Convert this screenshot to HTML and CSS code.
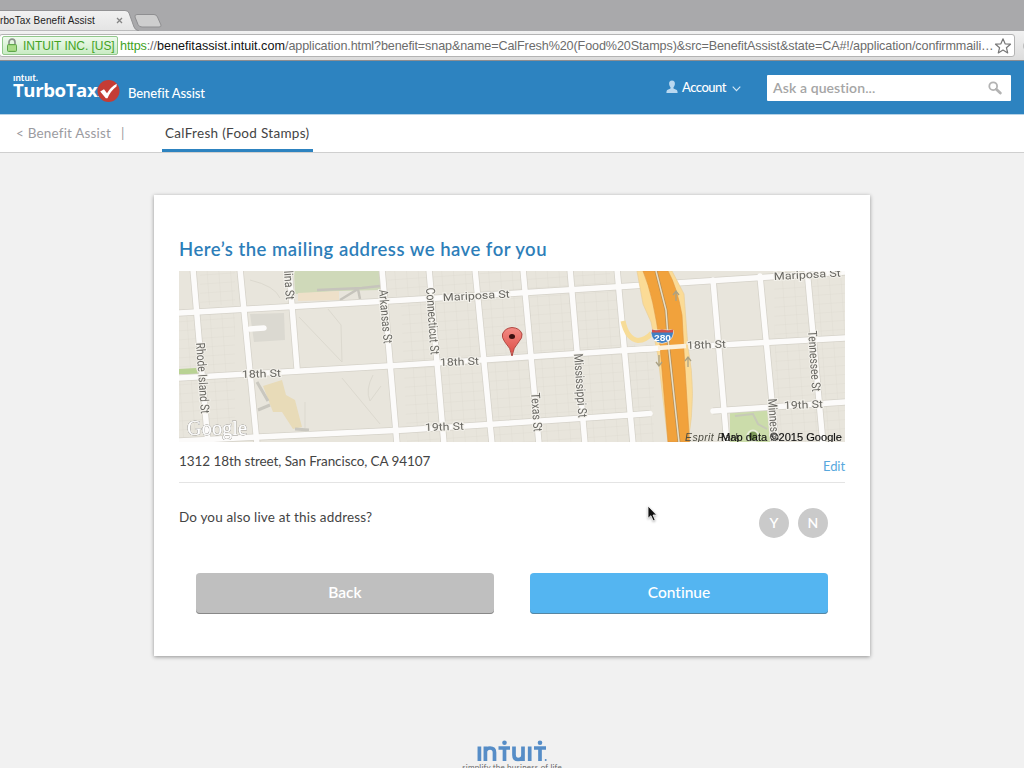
FILE: index.html
```html
<!DOCTYPE html>
<html lang="en">
<head>
<meta charset="utf-8">
<title>TurboTax Benefit Assist</title>
<link rel="stylesheet" href="styles.css">
</head>
<body>
<div class="browser">
  <div class="tabstrip">
    <svg class="tabshape" width="170" height="21" viewBox="0 10 170 21">
      <defs><linearGradient id="tg" x1="0" y1="0" x2="0" y2="1"><stop offset="0" stop-color="#f1f1f1"/><stop offset="1" stop-color="#e4e4e4"/></linearGradient></defs>
      <path d="M-2 10.5H125Q128 10.5 129 13L134 27Q135 30 139 31H-2Z" fill="url(#tg)" stroke="#929294"/>
      <path d="M137 14.5H154Q156.500 14.500 157.500 17L161 25Q161.500 27 159 27H142Q139 27 138 24.500L135 17Q134.500 14.500 137 14.500Z" fill="#cecece" stroke="#8f8f91"/>
      <path d="M117 18l5 5m0-5l-5 5" stroke="#858585" stroke-width="1.300"/>
    </svg>
    <span class="tabtitle">rboTax Benefit Assist</span>
  </div>
  <div class="toolbar">
    <div class="omnibox">
      <div class="cert">
        <svg width="12" height="15" viewBox="0 0 12 15"><path d="M3 7V4.200a3 3 0 0 1 6 0V7" fill="none" stroke="#8b938a" stroke-width="1.700"/><rect x="1.500" y="6.500" width="9" height="7" rx="1" fill="#9bd477" stroke="#5ea54c"/><path d="M2 9h8M2 11h8" stroke="#c2e8aa" stroke-width=".7"/></svg>
        <span>INTUIT INC. [US]</span>
      </div>
      <span class="url"><span class="secure">https</span>://<span class="domain">benefitassist.intuit.com</span>/application.html?benefit=snap&amp;name=CalFresh%20(Food%20Stamps)&amp;src=BenefitAssist&amp;state=CA#!/application/confirmmaili…</span>
      <svg class="star" width="18" height="18" viewBox="0 0 18 18"><path d="M9 1.800l2.100 5 5.400.4-4.100 3.500 1.300 5.200L9 13.100l-4.700 2.800 1.300-5.200L1.500 7.200l5.400-.4z" fill="#fff" stroke="#777" stroke-width="1.200" stroke-linejoin="round"/></svg>
    </div>
    <span class="knob"></span>
  </div>
</div>
<header class="header">
  <div class="brand">
    <div class="wordmark"><span class="mini">ıntuıt.</span><span class="turbo">TurboTax<small>.</small></span></div>
    <svg class="check" width="23" height="24" viewBox="0 0 23 24"><circle cx="11.500" cy="12" r="11" fill="#c43c35"/><path d="M3.200 12.500l3.800-2.300 3 4Q13.500 8 19.800 4.700L19.500 7.500Q13.500 12 10.500 19.200L8.800 19.200Z" fill="#fff"/></svg>
    <span class="product">Benefit Assist</span>
  </div>
  <div class="account">
    <svg width="12" height="14" viewBox="0 0 12 14"><path d="M6 .5c2 0 3.100 1.400 2.900 3.400C8.800 5.600 8 6.400 7.500 7.200V8.500L10.800 10Q11.600 10.500 11.600 13H.4Q.4 10.500 1.200 10L4.500 8.500V7.200C4 6.400 3.200 5.600 3.100 3.900 2.900 1.900 4 .5 6 .5Z" fill="#b9d8f0"/></svg>
    <span>Account</span>
    <svg width="9" height="6" viewBox="0 0 9 6"><path d="M.7.700L4.500 4.700 8.300.7" fill="none" stroke="#d5e8f6" stroke-width="1.100"/></svg>
  </div>
  <div class="search"><span>Ask a question...</span>
    <svg width="14" height="14" viewBox="0 0 14 14"><circle cx="5.200" cy="5.200" r="3.900" fill="none" stroke="#b3b3b3" stroke-width="1.800"/><path d="M8.300 8.300l4 3.700" stroke="#b3b3b3" stroke-width="2.800" stroke-linecap="round"/></svg>
  </div>
</header>
<nav class="subnav">
  <span class="crumb">&lt; Benefit Assist</span><span class="bar">|</span>
  <span class="tab">CalFresh (Food Stamps)</span>
</nav>
<main class="main">
  <section class="card">
    <h1><span>Here’s the mailing address we have for you</span></h1>
    <svg class="map" width="666" height="171" viewBox="179 271 666 171">
      <defs>
        <pattern id="lots" width="11.700" height="9" patternUnits="userSpaceOnUse" patternTransform="rotate(-4)"><path d="M0 0H11.700M0 0V9" stroke="#dad7cc" stroke-width=".6"/></pattern>
        <linearGradient id="pin" x1="0" y1="0" x2="0" y2="1"><stop offset="0" stop-color="#f28b84"/><stop offset="1" stop-color="#dd4b43"/></linearGradient>
      </defs>
      <rect x="179" y="271" width="666" height="171" fill="#e8e5dc"/>
      <path d="M179 315L235 311V442H179ZM401 303L618 291 630 442H407ZM774 280L845 275V442H776ZM200 271H235V305H200ZM388 271H610V285L388 297ZM624 345L654 344V442H629Z" fill="url(#lots)"/>
      <path d="M294 271H380V290L340 291 295 294Z" fill="#cfd9b9"/>
      <path d="M298 293L339 291V300L298 301Z" fill="#eee0c9"/>
      <path d="M317 290l45-2 18-2M340 300l18-11 2 10" fill="none" stroke="#c6c4bc" stroke-width="2.500"/>
      <path d="M250 314L284 313 285 340 254 342Z" fill="#dbd9d1"/>
      <path d="M179 369L196 368 198 374H179Z" fill="#b9d293"/>
      <path d="M263 386L282 380 286 395 295 400 302 427 293 429 282 412 273 412Z" fill="#e8dbb8"/>
      <path d="M257 382l11 19M258 410l12-5M295 429l14 1" stroke="#c9c7bf" stroke-width="3"/>
      <path d="M299 317L342 362 341 325 328 309M373 375q-8 15-3 26l11-15M342 378l38 46M305 402V428M250 280q25 6 30 18" fill="none" stroke="#dcd9cf"/>
      <path d="M730 412L767 410 770 442H730Z" fill="#cbdcaa"/><path d="M735 416l18-2 5 10 9 5" fill="none" stroke="#c7c9b8" stroke-width="2"/>
      <g fill="none" stroke="#d5d2c9" stroke-width="7">
        <path d="M193 269L208 444M240 269L257 444M289 269L297 368M382 269L397 444M429 269L444 444M475 269L492 444M523 269L539 444M570 269L585 444M617 269L633 444M713 278L727 444M760 276L776 444M807 269L823 444"/>
        <path d="M179 313L405 300 630 286 845 272M179 378L405 365 630 350 845 338M179 441L258 437 405 430 630 415 650 413.500M713 411L845 402"/>
      </g>
      <g fill="none" stroke="#fcfbfa" stroke-width="5.500" stroke-linecap="round">
        <path d="M193 269L208 444M240 269L257 444M289 269L297 368M382 269L397 444M429 269L444 444M475 269L492 444M523 269L539 444M570 269L585 444M617 269L633 444M713 280L727 444M760 276L776 444M807 269L823 444"/>
        <path d="M179 313L405 300 630 286 845 272M179 378L405 365 630 350 845 338M179 441L258 437 405 430 630 415 650 413.500M713 411L845 402M250 329L264 328"/>
      </g>
      <path d="M623 321Q627 339 638 340.500 646 340 652 333" fill="none" stroke="#f7dc98" stroke-width="5"/>
      <path d="M637 271H672L684 294 688 348Q697 392 688 442H668L658 356 651 322 643 304Z" fill="#fbdb96" stroke="#e9cf98" stroke-width=".7"/>
      <path d="M643 271H668Q677 287 682 315L684 352 689.500 442H668L660 346Q654 297 643 271Z" fill="#f1a23c" stroke="#df9640" stroke-width=".6"/>
      <path d="M656 271L666 310 669 350 679 442" fill="none" stroke="#b98e54" stroke-width="3"/>
      <path d="M656 271L666 310 669 350 679 442" fill="none" stroke="#e6dfc8" stroke-width="1.500"/>
      <path d="M620 350.500L660 348" stroke="#fcfbfa" stroke-width="5.500"/><path d="M658 348L686 346" stroke="#fcf1dc" stroke-width="4.500"/>
      <path d="M676 301v-9m-3 3l3-4 3 4M659 355v10m-3-3l3 4 3-4M688 367v-9m-3 3l3-4 3 4" fill="none" stroke="#aaa184" stroke-width="1.300"/>
      <path d="M652 330L673 330 673.500 333Q672 342 662 343.500 652 342 651 333Z" fill="#3f80c4" stroke="#eee" stroke-width=".7"/><path d="M652 329.500l4 1 6-1 6 1 5-1v3H652z" fill="#d44f48"/>
      <text x="654" y="340.500" class="shield" textLength="17" lengthAdjust="spacingAndGlyphs">280</text>
      <g class="label">
        <text transform="translate(443 301) rotate(-3)" textLength="67" lengthAdjust="spacingAndGlyphs">Mariposa St</text>
        <text transform="translate(774 280) rotate(-3)" textLength="67" lengthAdjust="spacingAndGlyphs">Mariposa St</text>
        <text transform="translate(242 378) rotate(-2)" textLength="39" lengthAdjust="spacingAndGlyphs">18th St</text>
        <text transform="translate(440 366) rotate(-2)" textLength="39" lengthAdjust="spacingAndGlyphs">18th St</text>
        <text transform="translate(687 349) rotate(-2)" textLength="39" lengthAdjust="spacingAndGlyphs">18th St</text>
        <text transform="translate(425 431) rotate(-2)" textLength="39" lengthAdjust="spacingAndGlyphs">19th St</text>
        <text transform="translate(784 409) rotate(-2)" textLength="39" lengthAdjust="spacingAndGlyphs">19th St</text>
      </g>
      <g class="label road">
        <text transform="translate(196 343) rotate(86)" textLength="71" lengthAdjust="spacingAndGlyphs">Rhode Island St</text>
        <text transform="translate(284 271) rotate(86)" textLength="29" lengthAdjust="spacingAndGlyphs">lina St</text>
        <text transform="translate(379 290) rotate(85)" textLength="54" lengthAdjust="spacingAndGlyphs">Arkansas St</text>
        <text transform="translate(426 288) rotate(86)" textLength="67" lengthAdjust="spacingAndGlyphs">Connecticut St</text>
        <text transform="translate(531 393) rotate(86)" textLength="39" lengthAdjust="spacingAndGlyphs">Texas St</text>
        <text transform="translate(574 354) rotate(86)" textLength="64" lengthAdjust="spacingAndGlyphs">Mississippi St</text>
        <text transform="translate(808 331) rotate(86)" textLength="61" lengthAdjust="spacingAndGlyphs">Tennessee St</text>
        <text transform="translate(768 399) rotate(86)" textLength="60" lengthAdjust="spacingAndGlyphs">Minnesota St</text>
      </g>
      <path d="M512 356Q511 348 504.500 341.500 501.500 337 502.500 334 505 328 512 327.500 520 328 522 334 522.500 338 519 341.500 513 348 512 356Z" fill="url(#pin)" stroke="#a93b36" stroke-width=".9"/>
      <ellipse cx="512" cy="336.500" rx="3" ry="2.500" fill="#3b1010"/>
      <text x="187" y="434.500" class="google" textLength="60" lengthAdjust="spacingAndGlyphs">Google</text>
      <circle cx="753" cy="436" r="5.500" fill="#7d9a59" stroke="#e8eedb" stroke-width="2"/>
      <text x="685" y="441" class="park" textLength="55">Esprit Park</text>
      <text x="721" y="440.500" class="copy" textLength="121" lengthAdjust="spacingAndGlyphs">Map data ©2015 Google</text>
    </svg>
    <div class="address"><span>1312 18th street, San Francisco, CA 94107</span><a class="edit">Edit</a></div>
    <div class="question"><span>Do you also live at this address?</span><div class="choices"><span>Y</span><span>N</span></div></div>
    <div class="actions"><div class="btn back">Back</div><div class="btn go">Continue</div></div>
  </section>
</main>
<footer class="footer">
  <svg width="72" height="22" viewBox="476 740 72 22" fill="none" stroke="#568dc7" stroke-width="3.700">
    <path d="M479.400 746.500V761M485.400 761V746.500M485.400 751Q486.500 748 490 748 494.500 748 494.500 752.500V761M498.500 748H510M504.500 746.500V761M514 746.500V755Q514 759.500 518 759.500 523 759.500 523 755V746.500M523 755V761M529.700 746.500V761M534 748H546M540 746.500V761"/>
    <g fill="#568dc7" stroke="none"><circle cx="504.500" cy="742.800" r="2.300"/><circle cx="540" cy="742.800" r="2.300"/><circle cx="545.700" cy="760" r="1"/></g>
  </svg>
  <span>simplify the business of life</span>
</footer>
<svg class="cursor" width="12" height="18" viewBox="0 0 12 18"><path d="M1 1V13.300L3.900 10.700 6.200 15.800 8.200 14.900 6 10H9.700Z" fill="#111" stroke="#fff" stroke-width=".8"/></svg>
</body>
</html>
```
FILE: styles.css
```css
* { box-sizing: border-box; }
body { margin: 0; width: 1024px; height: 768px; overflow: hidden; display: flex; flex-direction: column; background: #f1f1f1; font-family: Lato, sans-serif; color: #444; white-space: nowrap; font-variant-ligatures: none; }
svg { display: block; flex: none; }
.browser { height: 61px; flex: none; background: #a9a9ab; font-family: "Liberation Sans", sans-serif; }
.tabstrip { display: grid; height: 31px; align-items: end; }
.tabstrip > * { grid-area: 1 / 1; }
.tabtitle { font-size: 10px; color: #222; line-height: 20px; letter-spacing: .1px; }
.toolbar { height: 30px; display: flex; align-items: flex-start; padding-top: 3px; background: linear-gradient(#f1f1f1, #dcdcdc); border-bottom: 1px solid #8d8d90; }
.omnibox { width: 1016px; height: 23px; margin-left: -1px; flex: none; display: flex; align-items: center; background: #fff; border: 1px solid #b4b4b4; border-radius: 3px; }
.cert { width: 116px; height: 19px; margin-left: 2px; display: flex; align-items: center; gap: 5px; padding-left: 3px; border: 1px solid #92c88c; border-radius: 2px; background: linear-gradient(#effaed, #c9ebc4); color: #43a31f; font-size: 12px; letter-spacing: -.05px; }
.url { width: 871px; margin-left: 2px; font-size: 12.600px; letter-spacing: -.118px; color: #6c6c6c; }
.secure { color: #3ea21b; }
.domain { color: #111; letter-spacing: .03px; }
.star { margin-left: 3px; }
.knob { width: 12px; height: 12px; margin: 6px 0 0 8px; border-radius: 50%; background: #bbb; flex: none; }
.header { height: 53px; flex: none; background: #2d83c0; color: #fff; display: flex; padding-left: 13px; }
.brand { width: 653px; display: flex; }
.wordmark { display: flex; flex-direction: column; padding-top: 12px; width: 85px; }
.mini { font: bold 9.500px/10px Lato, sans-serif; letter-spacing: .05px; }
.turbo { font: 700 18.600px/14px "Open Sans", sans-serif; letter-spacing: -.4px; }
.turbo small { font-size: 8px; font-weight: 400; line-height: 1; }
.check { margin: 18px 8px 0 -1px; }
.product { font-size: 13px; line-height: 20px; margin-top: 22px; font-weight: 500; letter-spacing: -.1px; }
.account { width: 101px; display: flex; gap: 4px; padding-top: 17px; font-size: 13px; line-height: 19px; font-weight: 500; }
.account span { letter-spacing: -.5px; }
.account svg { margin-top: 2px; }
.account svg:last-child { margin: 8px 0 0 2px; }
.search { width: 244px; height: 26px; margin-top: 14px; padding: 0 9px 0 6px; background: #fff; color: #a5a5a5; display: flex; align-items: center; justify-content: space-between; font-size: 14px; font-weight: 600; border-radius: 1px; letter-spacing: .1px; line-height: 24px; }
.search span { margin-top: -1px; }
.subnav { height: 39px; flex: none; background: #fff; border-bottom: 1px solid #cfcfcf; border-top: 1px solid #b6d2e6; display: flex; font-size: 13.500px; line-height: 36px; color: #9b9b9f; padding-left: 16px; }
.crumb { width: 105px; letter-spacing: .18px; }
.bar { width: 41px; }
.tab { width: 151px; height: 37px; padding-left: 3px; color: #444; border-bottom: 3px solid #2d83c0; letter-spacing: .3px; }
.main { padding: 42px 154px 0; flex: none; height: 587px; }
.card { width: 716px; height: 461px; background: #fff; box-shadow: 0 1px 4px rgba(0,0,0,.4); padding: 41px 25px 0; }
h1 { margin: 0; height: 35px; font-size: 18.500px; line-height: 26px; font-weight: 600; color: #2d7eb9; letter-spacing: .49px; }
.map { filter: blur(.3px); }
.label { font: 10.500px Roboto, sans-serif; fill: #686762; stroke: #f4f2ec; stroke-width: 2px; paint-order: stroke; }
.road { font-size: 12.500px; }
.shield { font: bold 8.500px "Liberation Sans", sans-serif; fill: #fff; }
.google { font: 20px "Liberation Serif", serif; fill: #fff; stroke: #fff; stroke-width: .5px; filter: drop-shadow(.7px .8px .3px #66645e) drop-shadow(0 0 .5px #a5a39b); }
.park { font: italic 10.500px "Liberation Sans", sans-serif; fill: #4d4d43; }
.copy { font: 10.500px "Liberation Sans", sans-serif; fill: #111; stroke: #111; stroke-width: .15px; }
.address { height: 41px; border-bottom: 1px solid #e4e4e4; display: flex; justify-content: space-between; width: 666px; font-size: 13.500px; line-height: 38px; letter-spacing: -.08px; }
.edit { color: #58a8dd; font-size: 13px; line-height: 48px; }
.question { display: flex; justify-content: space-between; width: 649px; height: 90px; padding-top: 15px; font-size: 13.500px; line-height: 38px; letter-spacing: .16px; }
.choices { display: flex; gap: 9px; padding-top: 10px; }
.choices span { width: 30px; height: 30px; border-radius: 50%; background: #cacaca; color: #fff; text-align: center; line-height: 30px; font-size: 14px; font-weight: 600; }
.actions { display: flex; gap: 36px; padding-left: 17px; }
.btn { width: 298px; height: 41px; border-radius: 4px; text-align: center; color: #fff; font-size: 15.500px; line-height: 38px; font-weight: 500; box-shadow: inset 0 -1px 0 #888; }
.back { background: #bfbfbf; font-weight: 600; }
.go { background: #54b5f1; box-shadow: inset 0 -1px 0 #5686a2; }
.footer { display: flex; flex-direction: column; align-items: center; flex: none; height: 28px; overflow: hidden; font-size: 8px; line-height: 10px; color: #666; }
.footer span { letter-spacing: .18px; }
.cursor { position: absolute; left: 647px; top: 505px; filter: drop-shadow(0 1px 1px rgba(0,0,0,.3)); }
```
